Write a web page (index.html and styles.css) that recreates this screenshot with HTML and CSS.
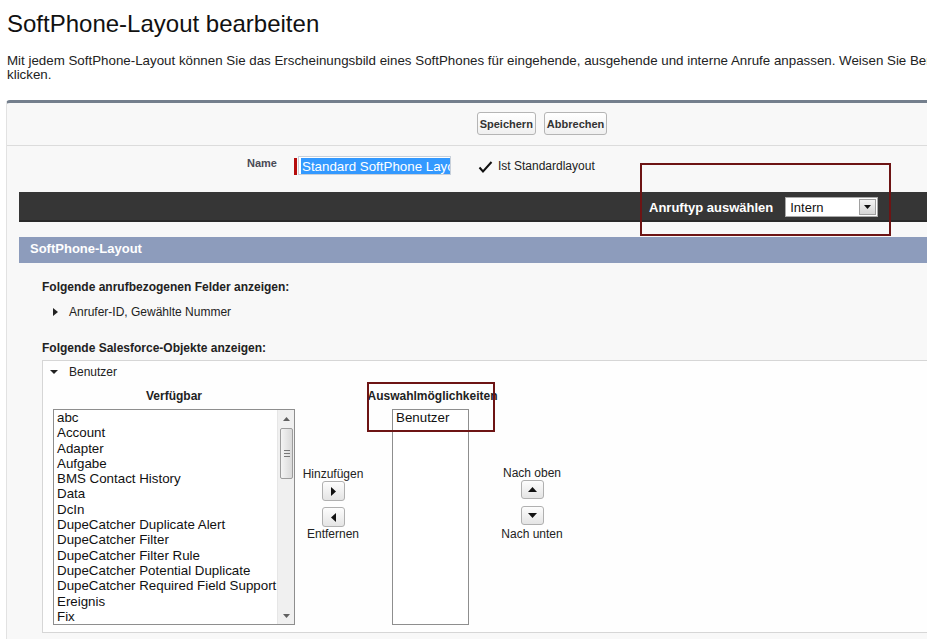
FILE: index.html
```html
<!DOCTYPE html>
<html lang="de">
<head>
    <meta charset="UTF-8">
    <title>SoftPhone-Layout bearbeiten</title>
    <link rel="stylesheet" href="styles.css">
</head>
<body>
<div class="page">
    <h1 class="page-title">SoftPhone-Layout bearbeiten</h1>
    <p class="page-desc">Mit jedem SoftPhone-Layout können Sie das Erscheinungsbild eines SoftPhones für eingehende, ausgehende und interne Anrufe anpassen. Weisen Sie Benutzern Layouts zu, indem Sie auf „Layoutzuweisung“<br>klicken.</p>

    <div class="panel">
        <div class="btn-row">
            <button class="btn">Speichern</button>
            <button class="btn">Abbrechen</button>
        </div>
        <div class="panel-body">
            <div class="name-row">
                <label class="field-label">Name</label>
                <div class="required-bar"></div>
                <div class="text-input"><span class="selected">Standard SoftPhone Layout</span></div>
                <div class="check-field">
                    <svg width="15" height="12" viewBox="0 0 15 12"><path d="M1.5 6.5 L5 10.5 L13.5 1" fill="none" stroke="#111" stroke-width="2"/></svg>
                    <span>Ist Standardlayout</span>
                </div>
            </div>

            <div class="call-bar">
                <span class="call-label">Anruftyp auswählen</span>
                <div class="select">
                    <span>Intern</span>
                    <span class="select-btn"><svg width="7" height="4" viewBox="0 0 7 4"><path d="M0 0 H7 L3.5 4 Z" fill="#111"/></svg></span>
                </div>
            </div>

            <div class="section-head">SoftPhone-Layout</div>
            <div class="section-body">
                <div class="sub-title">Folgende anrufbezogenen Felder anzeigen:</div>
                <div class="toggle closed"><span class="tri-right"></span>Anrufer-ID, Gewählte Nummer</div>

                <div class="sub-title second">Folgende Salesforce-Objekte anzeigen:</div>
                <div class="object-box">
                    <div class="toggle open"><span class="tri-down"></span>Benutzer</div>
                    <div class="dual-list">
                        <div class="list-col avail">
                            <div class="col-head">Verfügbar</div>
                            <div class="listbox">
                                <div class="list-items">
                                    <div>abc</div>
                                    <div>Account</div>
                                    <div>Adapter</div>
                                    <div>Aufgabe</div>
                                    <div>BMS Contact History</div>
                                    <div>Data</div>
                                    <div>DcIn</div>
                                    <div>DupeCatcher Duplicate Alert</div>
                                    <div>DupeCatcher Filter</div>
                                    <div>DupeCatcher Filter Rule</div>
                                    <div>DupeCatcher Potential Duplicate</div>
                                    <div>DupeCatcher Required Field Support</div>
                                    <div>Ereignis</div>
                                    <div>Fix</div>
                                </div>
                                <div class="scrollbar">
                                    <div class="sb-arrow"><svg width="7" height="4" viewBox="0 0 7 4"><path d="M0 4 H7 L3.5 0 Z" fill="#606060"/></svg></div>
                                    <div class="sb-thumb"><span></span><span></span><span></span></div>
                                    <div class="sb-arrow bottom"><svg width="7" height="4" viewBox="0 0 7 4"><path d="M0 0 H7 L3.5 4 Z" fill="#606060"/></svg></div>
                                </div>
                            </div>
                        </div>

                        <div class="list-col move">
                            <div>Hinzufügen</div>
                            <button class="arrow-btn"><svg width="5" height="9" viewBox="0 0 5 9"><path d="M0 0 L5 4.5 L0 9 Z" fill="#111"/></svg></button>
                            <button class="arrow-btn gap"><svg width="5" height="9" viewBox="0 0 5 9"><path d="M5 0 L0 4.5 L5 9 Z" fill="#111"/></svg></button>
                            <div>Entfernen</div>
                        </div>

                        <div class="list-col chosen">
                            <div class="col-head">Auswahlmöglichkeiten</div>
                            <div class="listbox small">
                                <div class="list-items">
                                    <div>Benutzer</div>
                                </div>
                            </div>
                        </div>

                        <div class="list-col order">
                            <div>Nach oben</div>
                            <button class="arrow-btn short"><svg width="9" height="5" viewBox="0 0 9 5"><path d="M0 5 L4.5 0 L9 5 Z" fill="#111"/></svg></button>
                            <button class="arrow-btn short gap"><svg width="9" height="5" viewBox="0 0 9 5"><path d="M0 0 L4.5 5 L9 0 Z" fill="#111"/></svg></button>
                            <div class="below">Nach unten</div>
                        </div>
                    </div>
                </div>
            </div>
        </div>
    </div>

    <div class="mark mark-calltype"></div>
    <div class="mark mark-chosen"></div>
</div>
</body>
</html>
```

FILE: styles.css
```css
html, body {
    margin: 0;
    overflow: hidden;
    background-color: #ffffff;
}
body {
    font-family: "Liberation Sans", Arial, sans-serif;
    color: #222;
}
.page {
    position: relative;
    width: 1085px;
    padding-top: 10px;
}
.page-title {
    margin: 0 0 0 7px;
    font-size: 24px;
    line-height: 28px;
    font-weight: normal;
    color: #111;
}
.page-desc {
    margin: 16px 0 0 7px;
    font-size: 13.33px;
    line-height: 14px;
    white-space: nowrap;
}
.panel {
    margin: 18px 0 0 6px;
    width: 1071px;
    box-sizing: border-box;
    border-top: 3px solid #747f8d;
    border-left: 1px solid #e2e2e2;
    border-radius: 4px 0 0 0;
    background-color: #f8f8f8;
    padding-bottom: 30px;
}
.btn-row {
    display: flex;
    justify-content: center;
    gap: 8px;
    height: 33px;
    padding-top: 9px;
    border-bottom: 1px solid #dcdcdc;
}
.btn {
    height: 23px;
    padding: 0 2px;
    font-family: "Liberation Sans", Arial, sans-serif;
    font-size: 11px;
    font-weight: bold;
    color: #333;
    border: 1px solid #b5b5b5;
    border-radius: 3px;
    background: linear-gradient(#ffffff, #f0f0f0);
}
.panel-body {
    padding: 0 12px;
}
.name-row {
    display: flex;
    align-items: flex-start;
    height: 36px;
    padding-top: 10px;
}
.field-label {
    width: 258px;
    text-align: right;
    padding-top: 1px;
    font-size: 11px;
    line-height: 13px;
    font-weight: bold;
    color: #4a4a56;
}
.required-bar {
    margin: 2px 0 0 17px;
    width: 3px;
    height: 17px;
    background-color: #b50d0d;
}
.text-input {
    margin-left: 1px;
    width: 153px;
    height: 19px;
    box-sizing: border-box;
    padding: 0 1px 0 2px;
    border: 1px solid #c8d0da;
    background-color: #fff;
    overflow: hidden;
    white-space: nowrap;
}
.selected {
    display: inline-block;
    padding: 0 1px;
    font-size: 13.33px;
    line-height: 17px;
    color: #fff;
    background-color: #3399ff;
}
.check-field {
    display: flex;
    align-items: flex-start;
    margin-left: 27px;
    padding-top: 3px;
    font-size: 12px;
    line-height: 14px;
}
.check-field svg {
    margin-top: 2px;
    margin-right: 5px;
}
.call-bar {
    display: flex;
    align-items: center;
    height: 30px;
    padding-left: 630px;
    background-color: #363636;
    box-shadow: inset 0 -2px 0 #2a2a2a;
}
.call-label {
    font-size: 13px;
    font-weight: bold;
    color: #fff;
}
.select {
    display: flex;
    align-items: center;
    margin-left: 12px;
    width: 93px;
    height: 20px;
    box-sizing: border-box;
    padding-left: 4px;
    border: 1px solid #a9a9a9;
    background-color: #fff;
    font-size: 13px;
    color: #111;
}
.select-btn {
    display: flex;
    align-items: center;
    justify-content: center;
    margin-left: auto;
    margin-right: 1px;
    width: 17px;
    height: 16px;
    box-sizing: border-box;
    border: 1px solid #a0a0a0;
    background: linear-gradient(#f4f4f4, #d6d6d6);
}
.section-head {
    margin-top: 15px;
    height: 26px;
    padding-left: 11px;
    line-height: 24px;
    font-size: 13px;
    font-weight: bold;
    color: #fff;
    background-color: #8d9cbc;
}
.section-body {
    padding: 17px 0 0 23px;
    font-size: 12px;
    line-height: 14px;
}
.sub-title {
    font-weight: bold;
}
.sub-title.second {
    margin-top: 22px;
}
.toggle {
    display: flex;
    align-items: center;
}
.toggle.closed {
    margin-top: 11px;
    padding-left: 11px;
}
.tri-right {
    width: 0;
    height: 0;
    margin-right: 11px;
    border-top: 4px solid transparent;
    border-bottom: 4px solid transparent;
    border-left: 5px solid #222;
}
.toggle.open {
    padding-left: 7px;
}
.tri-down {
    width: 0;
    height: 0;
    margin-right: 11px;
    border-left: 4px solid transparent;
    border-right: 4px solid transparent;
    border-top: 4px solid #222;
}
.object-box {
    margin-top: 5px;
    padding: 4px 0 7px 0;
    border: 1px solid #d6d6d6;
    border-right: none;
    background-color: #fefefe;
}
.dual-list {
    display: flex;
    align-items: flex-start;
    margin-top: 10px;
    padding-left: 10px;
}
.list-col {
    display: flex;
    flex-direction: column;
    align-items: center;
}
.col-head {
    font-weight: bold;
    margin-bottom: 6px;
}
.avail {
    width: 242px;
}
.listbox {
    display: flex;
    width: 100%;
    height: 216px;
    box-sizing: border-box;
    border: 1px solid #8e8e8e;
    background-color: #fff;
    overflow: hidden;
}
.list-items {
    flex: 1;
    padding-left: 3px;
    font-size: 13.33px;
    line-height: 15.3px;
    color: #111;
    white-space: nowrap;
}
.scrollbar {
    display: flex;
    flex-direction: column;
    width: 16px;
    background-color: #f0f0f0;
    border-left: 1px solid #e6e6e6;
}
.sb-arrow {
    display: flex;
    align-items: center;
    justify-content: center;
    height: 17px;
}
.sb-arrow.bottom {
    margin-top: auto;
}
.sb-thumb {
    display: flex;
    flex-direction: column;
    align-items: center;
    justify-content: center;
    gap: 2px;
    height: 49px;
    margin: 1px 1px 0 2px;
    border: 1px solid #9c9c9c;
    border-radius: 2px;
    background: linear-gradient(90deg, #f4f4f4, #d9d9d9);
}
.sb-thumb span {
    width: 6px;
    height: 1px;
    background-color: #777;
}
.move {
    width: 70px;
    margin-left: 3px;
    padding-top: 78px;
}
.arrow-btn {
    display: flex;
    align-items: center;
    justify-content: center;
    width: 23px;
    height: 20px;
    padding: 0;
    border: 1px solid #b0b0b0;
    border-radius: 3px;
    background: linear-gradient(#fdfdfd, #e4e4e4);
}
.arrow-btn.gap {
    margin-top: 6px;
}
.arrow-btn.short {
    height: 19px;
}
.arrow-btn.short.gap {
    margin-top: 7px;
}
.chosen {
    width: 129px;
    align-items: flex-start;
}
.chosen .col-head {
    align-self: center;
}
.listbox.small {
    width: 77px;
    margin-left: 24px;
}
.order {
    width: 64px;
    margin-left: 3px;
    padding-top: 77px;
}
.order .below {
    margin-top: 2px;
}
.mark {
    position: absolute;
    box-sizing: border-box;
    border: 2px solid #6d1414;
}
.mark-calltype {
    left: 640px;
    top: 163px;
    width: 251px;
    height: 73px;
}
.mark-chosen {
    left: 367px;
    top: 382px;
    width: 128px;
    height: 50px;
}
```
